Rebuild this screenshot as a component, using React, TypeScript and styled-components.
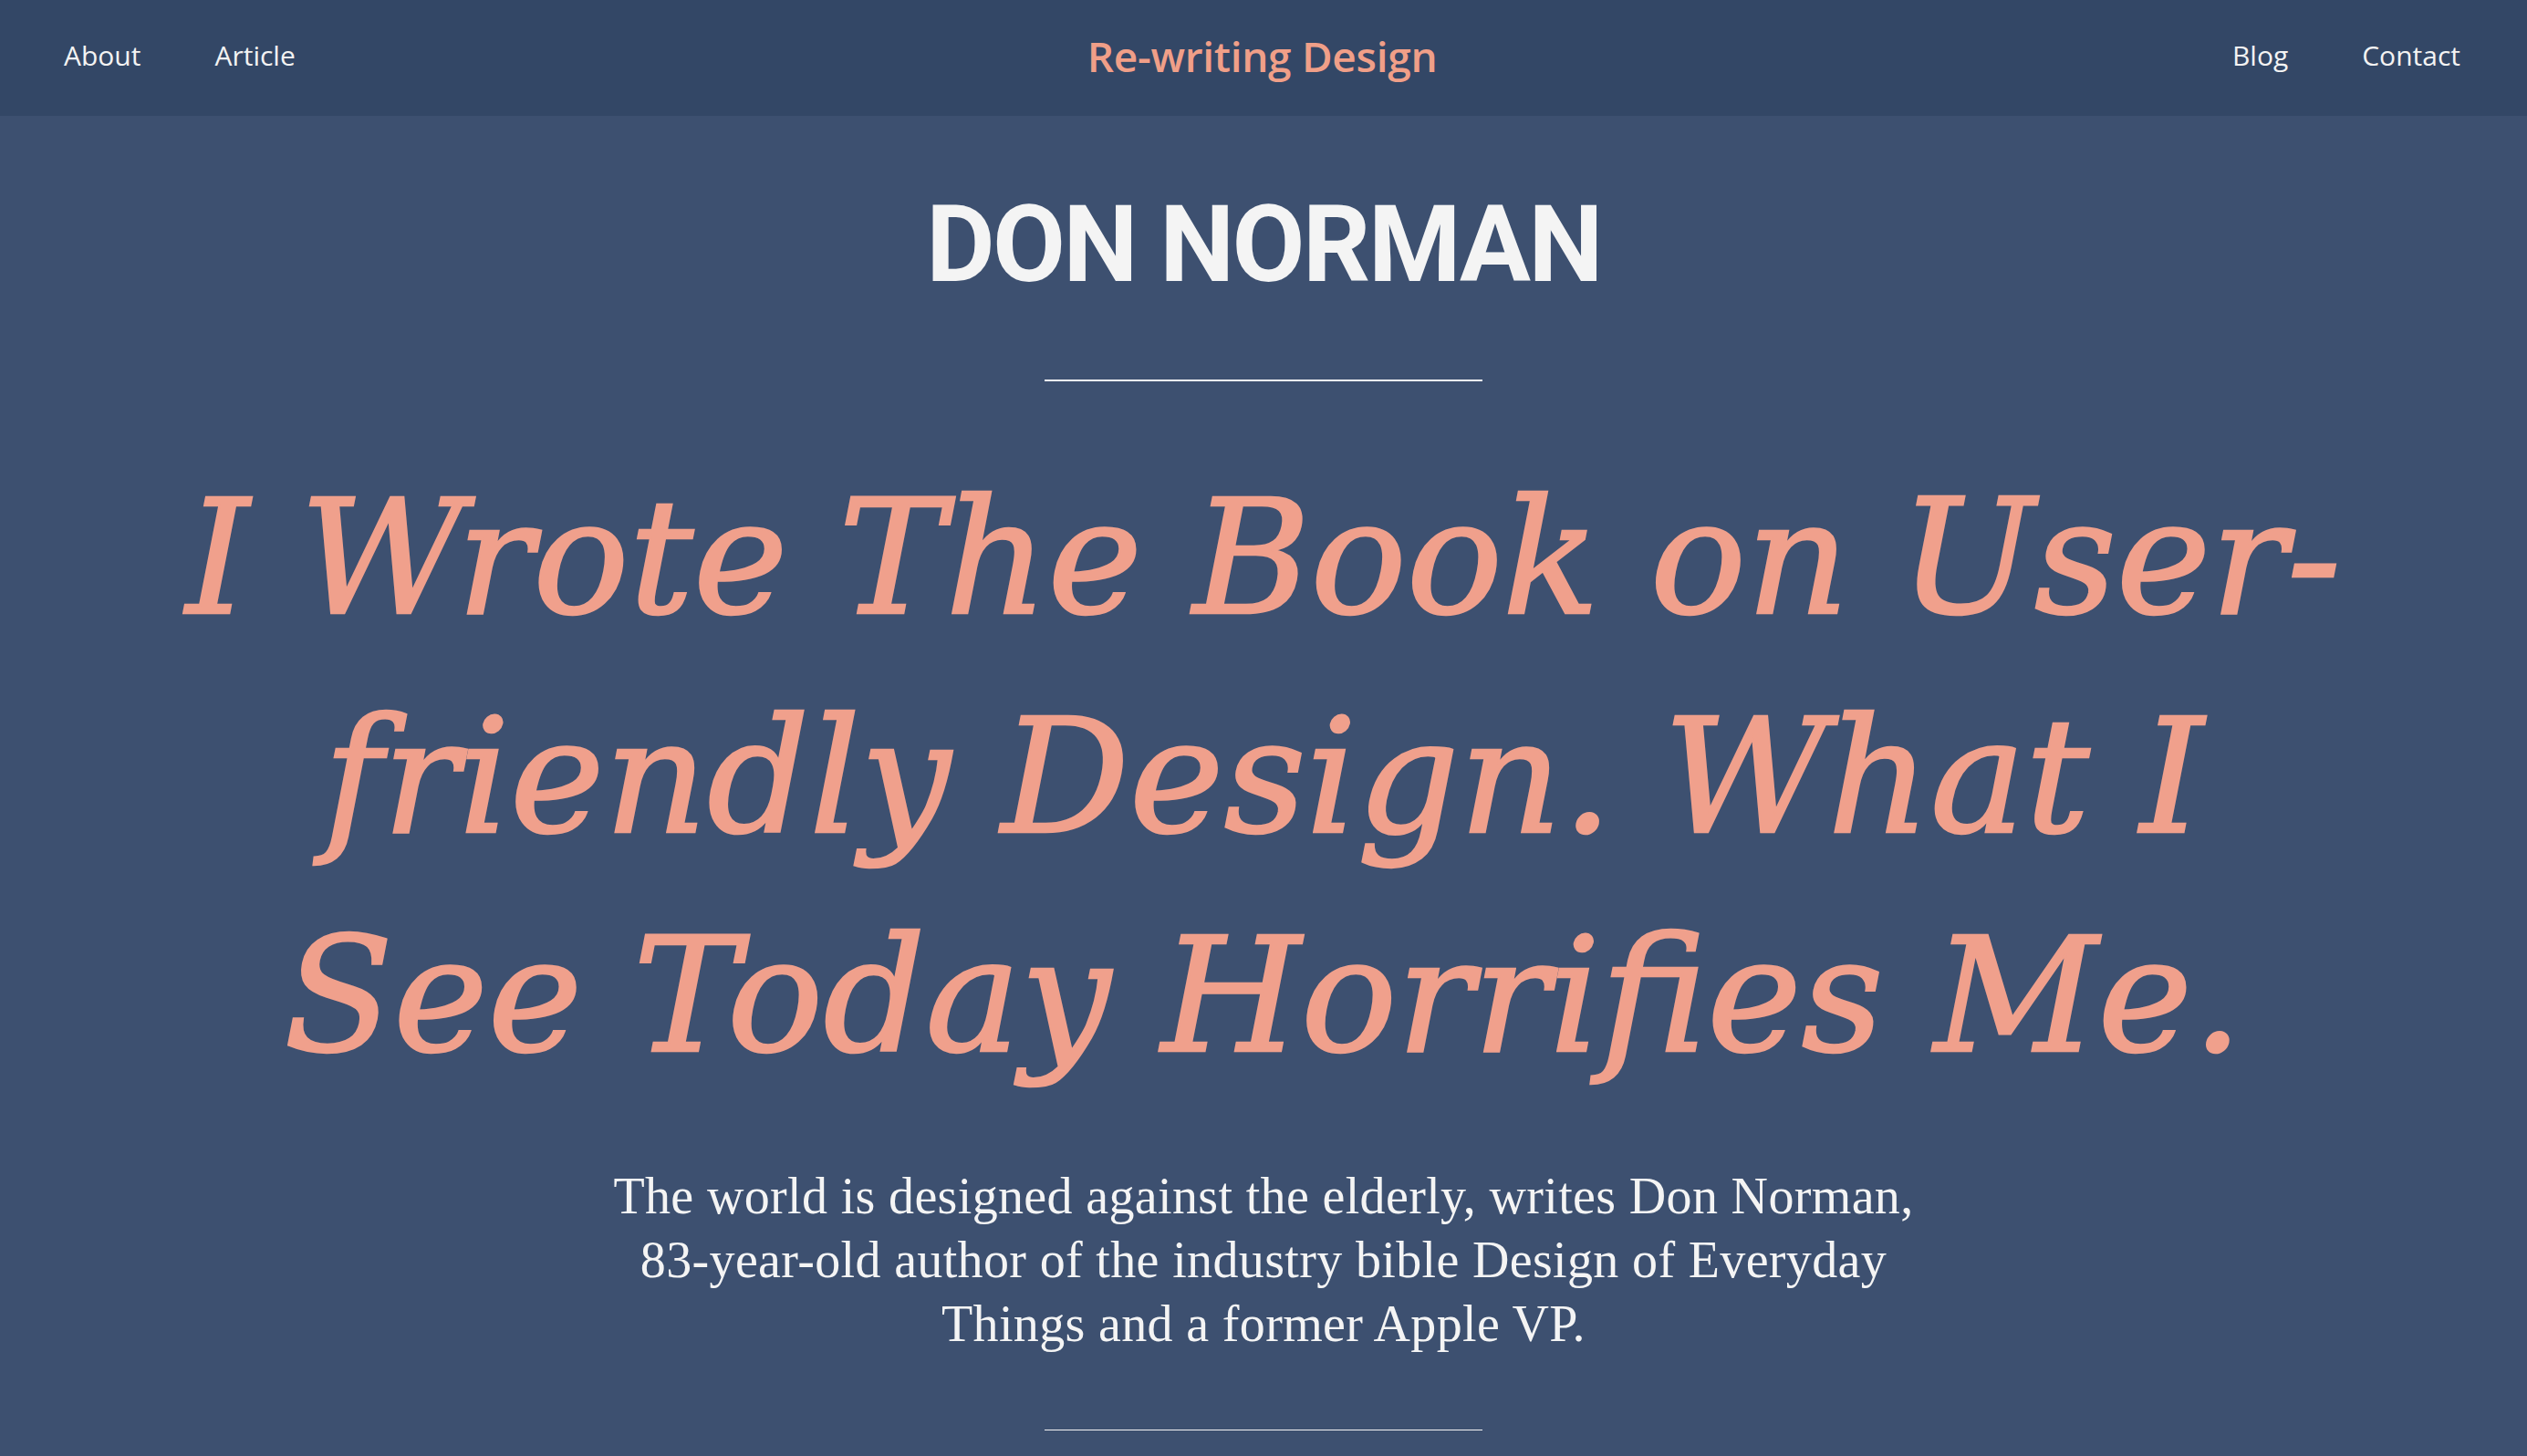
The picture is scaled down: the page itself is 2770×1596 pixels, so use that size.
import React from "react";
import styled, { createGlobalStyle } from "styled-components";

const GlobalStyle = createGlobalStyle`
  html, body {
    margin: 0;
    padding: 0;
    background: #3d5070;
  }
  body {
    font-family: "Open Sans", "Noto Sans", sans-serif;
  }
  * { box-sizing: border-box; }
`;

const Page = styled.div`
  height: 1596px;
  overflow: hidden;
  background: #3d5070;
  display: flex;
  flex-direction: column;
`;

const NavBar = styled.header`
  height: 127px;
  flex-shrink: 0;
  background: #334766;
  display: grid;
  grid-template-columns: 1fr auto 1fr;
  align-items: center;
  padding: 0 73px 6px 70px;
`;

const NavGroup = styled.nav<{ $align: "start" | "end" }>`
  display: flex;
  gap: 81px;
  justify-content: ${(p) => (p.$align === "start" ? "flex-start" : "flex-end")};
`;

const NavLink = styled.a`
  font-family: "Open Sans", "Noto Sans", sans-serif;
  font-size: 30px;
  color: #f3f3f3;
  text-decoration: none;
`;

const Brand = styled.a`
  font-family: "Open Sans", "Noto Sans", sans-serif;
  font-weight: 600;
  font-size: 46px;
  letter-spacing: -0.3px;
  color: #f09f88;
  text-decoration: none;
`;

const Main = styled.main`
  display: flex;
  flex-direction: column;
  align-items: center;
`;

const Author = styled.h2`
  margin: 83px 0 0;
  font-family: Roboto, "Open Sans", sans-serif;
  font-weight: 700;
  font-size: 116px;
  line-height: 1;
  letter-spacing: -2.5px;
  color: #f4f4f4;
`;

const Rule = styled.hr<{ $thick: number; $top: number }>`
  width: 480px;
  margin: ${(p) => p.$top}px 0 0;
  border: none;
  height: ${(p) => p.$thick}px;
  background: #f4f4f4;
`;

const Headline = styled.h1`
  margin: 74px 0 0;
  font-family: "DejaVu Serif", "Liberation Serif", serif;
  font-style: italic;
  font-weight: 400;
  font-size: 175px;
  line-height: 240px;
  text-align: center;
  color: #f0a08c;
  -webkit-text-stroke: 2.5px #f0a08c;
  white-space: nowrap;
`;

const Lede = styled.p`
  margin: 64px 0 0;
  font-family: "Liberation Serif", "DejaVu Serif", serif;
  font-size: 56px;
  line-height: 70px;
  letter-spacing: 0.35px;
  text-align: center;
  color: #f4f4f4;
  white-space: nowrap;
`;

export default function App() {
  return (
    <>
      <GlobalStyle />
      <Page>
        <NavBar>
          <NavGroup $align="start">
            <NavLink href="#">About</NavLink>
            <NavLink href="#">Article</NavLink>
          </NavGroup>
          <Brand href="#">Re-writing Design</Brand>
          <NavGroup $align="end">
            <NavLink href="#">Blog</NavLink>
            <NavLink href="#">Contact</NavLink>
          </NavGroup>
        </NavBar>
        <Main>
          <Author>DON NORMAN</Author>
          <Rule $thick={2} $top={90} />
          <Headline>
            I Wrote The Book on User-
            <br />
            friendly Design. What I
            <br />
            See Today Horrifies Me.
          </Headline>
          <Lede>
            The world is designed against the elderly, writes Don Norman,
            <br />
            83-year-old author of the industry bible Design of Everyday
            <br />
            Things and a former Apple VP.
          </Lede>
          <Rule $thick={1} $top={81} />
        </Main>
      </Page>
    </>
  );
}
